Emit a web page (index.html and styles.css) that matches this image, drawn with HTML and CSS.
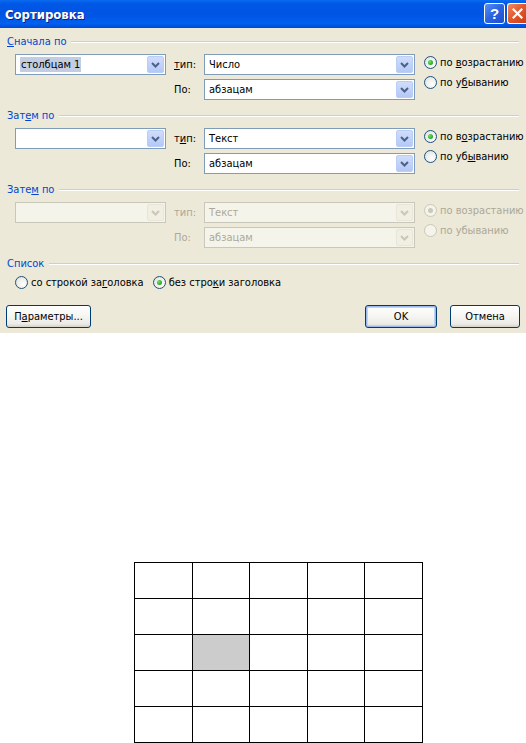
FILE: index.html
```html
<!DOCTYPE html>
<html lang="ru">
<head>
<meta charset="utf-8">
<title>Сортировка</title>
<link rel="stylesheet" href="styles.css">
</head>
<body>
<div class="dialog">
  <div class="titlebar">
    <span class="title">Сортировка</span>
    <div class="tbtns">
      <span class="tb help">?</span>
      <span class="tb close"><svg width="11" height="11" viewBox="0 0 11 11"><path d="M1.5 1.5 L9.5 9.5 M9.5 1.5 L1.5 9.5" stroke="#fff" stroke-width="2.2" stroke-linecap="square"/></svg></span>
    </div>
  </div>
  <div class="content">
    <section class="group">
      <div class="legend"><span><u>С</u>начала по</span><i class="line"></i></div>
      <div class="rows">
        <div class="combo c-first"><span class="val"><span class="sel">столбцам 1</span></span><span class="arrow"><svg width="9" height="6" viewBox="0 0 9 6"><path d="M1 1 L4.5 4.5 L8 1" fill="none" stroke="#4d6185" stroke-width="2"/></svg></span></div>
        <span class="lbl r1"><u>т</u>ип:</span>
        <div class="combo c-mid r1"><span class="val">Число</span><span class="arrow"><svg width="9" height="6" viewBox="0 0 9 6"><path d="M1 1 L4.5 4.5 L8 1" fill="none" stroke="#4d6185" stroke-width="2"/></svg></span></div>
        <div class="radios">
          <label class="radio"><span class="dot on"></span><span>по <u>в</u>озрастанию</span></label>
          <label class="radio"><span class="dot"></span><span>по у<u>б</u>ыванию</span></label>
        </div>
        <span class="lbl r2">По:</span>
        <div class="combo c-mid r2"><span class="val">абзацам</span><span class="arrow"><svg width="9" height="6" viewBox="0 0 9 6"><path d="M1 1 L4.5 4.5 L8 1" fill="none" stroke="#4d6185" stroke-width="2"/></svg></span></div>
      </div>
    </section>

    <section class="group">
      <div class="legend"><span>Зат<u>е</u>м по</span><i class="line"></i></div>
      <div class="rows">
        <div class="combo c-first"><span class="val"></span><span class="arrow"><svg width="9" height="6" viewBox="0 0 9 6"><path d="M1 1 L4.5 4.5 L8 1" fill="none" stroke="#4d6185" stroke-width="2"/></svg></span></div>
        <span class="lbl r1">т<u>и</u>п:</span>
        <div class="combo c-mid r1"><span class="val">Текст</span><span class="arrow"><svg width="9" height="6" viewBox="0 0 9 6"><path d="M1 1 L4.5 4.5 L8 1" fill="none" stroke="#4d6185" stroke-width="2"/></svg></span></div>
        <div class="radios">
          <label class="radio"><span class="dot on"></span><span>по в<u>о</u>зрастанию</span></label>
          <label class="radio"><span class="dot"></span><span>по уб<u>ы</u>ванию</span></label>
        </div>
        <span class="lbl r2">По:</span>
        <div class="combo c-mid r2"><span class="val">абзацам</span><span class="arrow"><svg width="9" height="6" viewBox="0 0 9 6"><path d="M1 1 L4.5 4.5 L8 1" fill="none" stroke="#4d6185" stroke-width="2"/></svg></span></div>
      </div>
    </section>

    <section class="group disabled">
      <div class="legend"><span>Зате<u>м</u> по</span><i class="line"></i></div>
      <div class="rows">
        <div class="combo c-first"><span class="val"></span><span class="arrow"><svg width="9" height="6" viewBox="0 0 9 6"><path d="M1 1 L4.5 4.5 L8 1" fill="none" stroke="#c9c7ba" stroke-width="2"/></svg></span></div>
        <span class="lbl r1">тип:</span>
        <div class="combo c-mid r1"><span class="val">Текст</span><span class="arrow"><svg width="9" height="6" viewBox="0 0 9 6"><path d="M1 1 L4.5 4.5 L8 1" fill="none" stroke="#c9c7ba" stroke-width="2"/></svg></span></div>
        <div class="radios">
          <label class="radio"><span class="dot on"></span><span>по возрастанию</span></label>
          <label class="radio"><span class="dot"></span><span>по убыванию</span></label>
        </div>
        <span class="lbl r2">По:</span>
        <div class="combo c-mid r2"><span class="val">абзацам</span><span class="arrow"><svg width="9" height="6" viewBox="0 0 9 6"><path d="M1 1 L4.5 4.5 L8 1" fill="none" stroke="#c9c7ba" stroke-width="2"/></svg></span></div>
      </div>
    </section>

    <section class="list-group">
      <div class="legend"><span>Список</span><i class="line"></i></div>
      <div class="list-radios">
        <label class="radio"><span class="dot"></span><span>со строкой за<u>г</u>оловка</span></label>
        <label class="radio"><span class="dot on"></span><span>без стро<u>к</u>и заголовка</span></label>
      </div>
    </section>

    <div class="buttons">
      <button class="btn btn-params">П<u>а</u>раметры...</button>
      <span class="spacer"></span>
      <button class="btn btn-ok">OK</button>
      <button class="btn btn-cancel">Отмена</button>
    </div>
  </div>
</div>

<table class="grid">
  <tr><td></td><td></td><td></td><td></td><td></td></tr>
  <tr><td></td><td></td><td></td><td></td><td></td></tr>
  <tr><td></td><td class="shade"></td><td></td><td></td><td></td></tr>
  <tr><td></td><td></td><td></td><td></td><td></td></tr>
  <tr><td></td><td></td><td></td><td></td><td></td></tr>
</table>
</body>
</html>
```

FILE: styles.css
```css
* { box-sizing: border-box; }
html, body { margin: 0; padding: 0; background: #fff; }
body {
  width: 526px;
  height: 743px;
  overflow: hidden;
  font-family: "DejaVu Sans Condensed", "DejaVu Sans", "Liberation Sans", sans-serif;
  font-size: 11px;
  color: #000;
}
u { text-decoration: underline; text-underline-offset: 1px; }

.dialog { width: 526px; background: #ece9d8; }

.titlebar {
  height: 28px;
  display: flex;
  align-items: center;
  justify-content: space-between;
  background: linear-gradient(to bottom, #0a6cf0 0%, #0058e6 12%, #0054e3 50%, #0060ef 85%, #0048d0 100%);
  padding-left: 5px;
}
.title {
  color: #fff;
  font-weight: bold;
  font-size: 13px;
  text-shadow: 1px 1px 0 #0a1f8a;
}
.tbtns { display: flex; gap: 2px; align-self: flex-start; margin-top: 3px; }
.tb {
  width: 21px;
  height: 21px;
  border: 1px solid #fff;
  border-radius: 3px;
  display: flex;
  align-items: center;
  justify-content: center;
  color: #fff;
  font-weight: bold;
  font-size: 15px;
  font-family: "Liberation Sans", sans-serif;
}
.help { background: linear-gradient(135deg, #5a8ef5 0%, #2a63e0 50%, #1c4fd0 100%); }
.close { background: linear-gradient(135deg, #f08a62 0%, #e2562a 50%, #c8401a 100%); width: 19px; border-right: 0; border-radius: 3px 0 0 3px; }

.content { padding: 7px 7px 5px 7px; }

.legend {
  display: flex;
  align-items: center;
  height: 13px;
  color: #0046d5;
}
.legend .line {
  flex: 1;
  margin-left: 5px;
  margin-top: 1px;
  border-top: 1px solid #d0d0bf;
  border-bottom: 1px solid #fff;
}

.group { margin-bottom: 9px; }
.rows {
  margin: 6px 0 0 8px;
  display: grid;
  grid-template-columns: 151px 38px 211px 1fr;
  grid-template-rows: 21px 21px;
  row-gap: 4px;
}
.c-first { grid-column: 1; grid-row: 1; }
.lbl { grid-column: 2; padding-left: 8px; display: flex; align-items: center; color: #000; }
.lbl.r1 { grid-row: 1; }
.lbl.r2 { grid-row: 2; }
.c-mid { grid-column: 3; }
.c-mid.r1 { grid-row: 1; }
.c-mid.r2 { grid-row: 2; }
.radios {
  grid-column: 4;
  grid-row: 1 / 3;
  display: flex;
  flex-direction: column;
  gap: 7px;
  padding: 2px 0 0 9px;
}

.combo {
  display: flex;
  align-items: stretch;
  border: 1px solid #7f9db9;
  background: #fff;
  padding: 1px;
}
.combo .val {
  flex: 1;
  display: flex;
  align-items: center;
  padding-left: 3px;
  white-space: nowrap;
  overflow: hidden;
}
.sel { background: #c3cde2; padding: 1px 1px; }
.arrow {
  width: 17px;
  display: flex;
  align-items: center;
  justify-content: center;
  background: linear-gradient(to bottom, #d0dcfa 0%, #c1d3fb 50%, #b4c8f6 100%);
  border: 1px solid #bacdf7;
  border-radius: 2px;
}

.radio { display: flex; align-items: center; gap: 3px; height: 13px; white-space: nowrap; }
.dot {
  width: 13px;
  height: 13px;
  border-radius: 50%;
  border: 1px solid #1c5180;
  background: radial-gradient(circle at 65% 65%, #fff 0%, #f2f2ef 40%, #dcdcd6 100%);
  display: flex;
  align-items: center;
  justify-content: center;
  flex: none;
}
.dot.on::after {
  content: "";
  width: 5px;
  height: 5px;
  border-radius: 50%;
  background: radial-gradient(circle at 35% 35%, #6ee06a 0%, #2fb02c 60%, #1c8c1a 100%);
}

.disabled .lbl, .disabled .radio { color: #aca899; }
.disabled .combo { border-color: #c9c7ba; background: #f5f4ea; color: #aca899; }
.disabled .arrow { background: #f1efe2; border-color: #e8e6d9; }
.disabled .dot { border-color: #cac8bb; background: #f5f4ea; }
.disabled .dot.on::after { background: #cac8bb; }

.list-radios {
  display: flex;
  gap: 9px;
  margin: 6px 0 0 8px;
}

.buttons {
  display: flex;
  align-items: center;
  margin-top: 16px;
  height: 23px;
}
.spacer { flex: 1; }
.btn {
  height: 23px;
  border: 1px solid #003c74;
  border-radius: 3px;
  background: linear-gradient(to bottom, #ffffff 0%, #f7f7f4 40%, #ecebe6 85%, #d6d0c5 100%);
  font-family: inherit;
  font-size: 11px;
  color: #000;
  padding: 0;
}
.btn-params { width: 85px; margin-left: -1px; }
.btn-ok {
  width: 72px;
  box-shadow: inset 0 0 0 1px #9db9eb, inset 0 0 0 2px #c0d3f5;
}
.btn-cancel { width: 70px; margin-left: 13px; margin-right: -1px; }

.grid {
  margin: 229px 0 0 134px;
  border-collapse: collapse;
  table-layout: fixed;
  width: 289px;
}
.grid td {
  border: 1.5px solid #000;
  height: 36px;
  padding: 0;
  background: #fff;
}
.grid td.shade { background: #cccccc; }
```
